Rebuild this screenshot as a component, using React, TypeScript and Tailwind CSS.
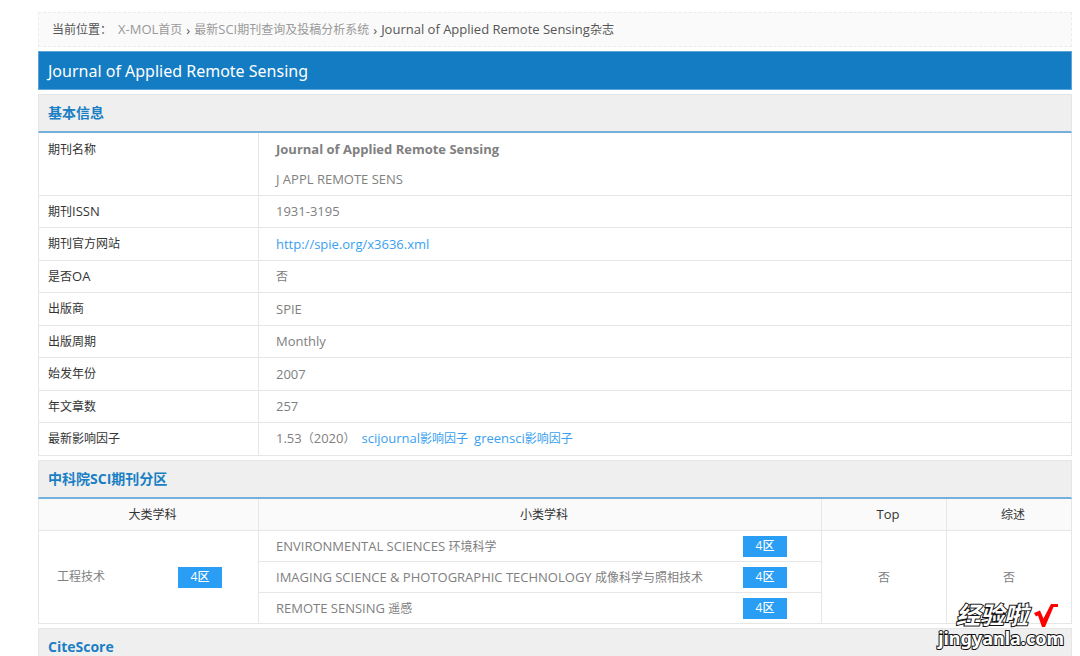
import type { ReactNode } from "react";

function Zh({ children }: { children: ReactNode }) {
  return (
    <span lang="zh" className="text-xs leading-5">
      {children}
    </span>
  );
}

function SectionTitle({ children }: { children: ReactNode }) {
  return (
    <h2 className="mt-1 flex h-[39px] items-center border border-b-2 border-[#e6e6e6] border-b-[#74b0db] bg-[#efefef] px-[9px] text-sm font-bold text-[#1a7fc4]">
      {children}
    </h2>
  );
}

function InfoRow({ label, children }: { label: ReactNode; children: ReactNode }) {
  return (
    <tr className="odd:h-[33px] even:h-8">
      <th scope="row" className="border border-[#e6e6e6] px-[9px] text-left font-normal text-[#333]">
        {label}
      </th>
      <td className="border border-[#e6e6e6] px-[17px]">{children}</td>
    </tr>
  );
}

function Zone() {
  return (
    <span className="flex h-[21px] w-11 shrink-0 items-center justify-center bg-[#2a9df4] text-xs font-medium text-white">
      4区
    </span>
  );
}

const subjects = [
  { en: "ENVIRONMENTAL SCIENCES", zh: "环境科学" },
  { en: "IMAGING SCIENCE & PHOTOGRAPHIC TECHNOLOGY", zh: "成像科学与照相技术" },
  { en: "REMOTE SENSING", zh: "遥感" },
];

export default function App() {
  return (
    <div className="relative h-screen overflow-hidden bg-white pt-3 pr-2 pl-[38px] font-['Open_Sans','Noto_Sans_CJK_SC',sans-serif] text-[13px] leading-5 text-[#808080]">
      <nav className="flex h-[35px] items-center border border-dashed border-[#ececec] bg-[#fafafa] px-[13px] text-[#555]">
        <span className="mr-1.5"><Zh>当前位置：</Zh></span>
        <a href="#" className="text-[#999]">X-MOL<Zh>首页</Zh></a>
        <span className="mx-1">›</span>
        <a href="#" className="text-[#999]"><Zh>最新</Zh>SCI<Zh>期刊查询及投稿分析系统</Zh></a>
        <span className="mx-1">›</span>
        <span>Journal of Applied Remote Sensing<Zh>杂志</Zh></span>
      </nav>

      <h1 className="mt-1 flex h-[39px] items-center border border-[#5ba5d8] bg-[#137cc3] px-[9px] font-['Noto_Sans',sans-serif] text-base text-white">
        Journal of Applied Remote Sensing
      </h1>

      <SectionTitle>基本信息</SectionTitle>
      <table className="w-full table-fixed border-collapse">
        <colgroup>
          <col className="w-[220px]" />
          <col />
        </colgroup>
        <tbody>
          <tr className="h-[62px]">
            <th scope="row" className="border border-t-0 border-[#e6e6e6] px-[9px] text-left align-top leading-8 font-normal text-[#333]">
              <Zh>期刊名称</Zh>
            </th>
            <td className="border border-t-0 border-[#e6e6e6] px-[17px] leading-[30px]">
              <p className="font-bold">Journal of Applied Remote Sensing</p>
              <p>J APPL REMOTE SENS</p>
            </td>
          </tr>
          <InfoRow label={<><Zh>期刊</Zh>ISSN</>}>1931-3195</InfoRow>
          <InfoRow label={<Zh>期刊官方网站</Zh>}>
            <a href="#" className="text-[#3a9ff0]">http://spie.org/x3636.xml</a>
          </InfoRow>
          <InfoRow label={<><Zh>是否</Zh>OA</>}><Zh>否</Zh></InfoRow>
          <InfoRow label={<Zh>出版商</Zh>}>SPIE</InfoRow>
          <InfoRow label={<Zh>出版周期</Zh>}>Monthly</InfoRow>
          <InfoRow label={<Zh>始发年份</Zh>}>2007</InfoRow>
          <InfoRow label={<Zh>年文章数</Zh>}>257</InfoRow>
          <InfoRow label={<Zh>最新影响因子</Zh>}>
            <span className="mr-1.5">1.53<Zh>（</Zh>2020<Zh>）</Zh></span>
            <a href="#" className="mr-1.5 text-[#3a9ff0]">scijournal<Zh>影响因子</Zh></a>
            <a href="#" className="text-[#3a9ff0]">greensci<Zh>影响因子</Zh></a>
          </InfoRow>
        </tbody>
      </table>

      <SectionTitle>中科院SCI期刊分区</SectionTitle>
      <table className="w-full table-fixed border-collapse">
        <colgroup>
          <col className="w-[220px]" />
          <col />
          <col className="w-[125px]" />
          <col className="w-[125px]" />
        </colgroup>
        <thead>
          <tr className="h-8 bg-[#fafafa] text-[#333]">
            <th className="border border-t-0 border-[#e6e6e6] pr-[9px] pl-[17px] font-normal"><Zh>大类学科</Zh></th>
            <th className="border border-t-0 border-[#e6e6e6] pr-[9px] pl-[17px] font-normal"><Zh>小类学科</Zh></th>
            <th className="border border-t-0 border-[#e6e6e6] pr-[9px] pl-[17px] font-normal">Top</th>
            <th className="border border-t-0 border-[#e6e6e6] pr-[9px] pl-[17px] font-normal"><Zh>综述</Zh></th>
          </tr>
        </thead>
        <tbody>
          {subjects.map((subject, i) => (
            <tr key={subject.en} className="h-[31px]">
              {i === 0 && (
                <td rowSpan={3} className="border border-[#e6e6e6] pr-9 pl-[18px]">
                  <div className="flex items-center justify-between">
                    <Zh>工程技术</Zh>
                    <Zone />
                  </div>
                </td>
              )}
              <td className="border border-[#e6e6e6] pr-[34px] pl-[17px]">
                <div className="flex items-center justify-between whitespace-nowrap">
                  <span>{subject.en} <Zh>{subject.zh}</Zh></span>
                  <Zone />
                </div>
              </td>
              {i === 0 && (
                <>
                  <td rowSpan={3} className="border border-[#e6e6e6] text-center"><Zh>否</Zh></td>
                  <td rowSpan={3} className="border border-[#e6e6e6] text-center"><Zh>否</Zh></td>
                </>
              )}
            </tr>
          ))}
        </tbody>
      </table>

      <SectionTitle>CiteScore</SectionTitle>

      {/* watermark */}
      <div className="absolute right-4 bottom-2 flex flex-col items-end font-bold text-white [-webkit-text-stroke:2px_#111] [paint-order:stroke_fill]">
        <div className="flex items-center gap-1.5 pr-1.5">
          <span className="font-['Noto_Sans_CJK_SC',sans-serif] text-2xl leading-6 italic">经验啦</span>
          <svg viewBox="0 0 24 24" className="mt-1 h-6 w-6" aria-hidden="true">
            <path d="M0 9L6 6.500L9.500 14.500L17 0H24V3H19.500L11 23H8L4 11.500L2 12.500Z" fill="#f00" />
          </svg>
        </div>
        <span className="font-['Noto_Sans',sans-serif] text-lg leading-5">jingyanla.com</span>
      </div>
    </div>
  );
}
